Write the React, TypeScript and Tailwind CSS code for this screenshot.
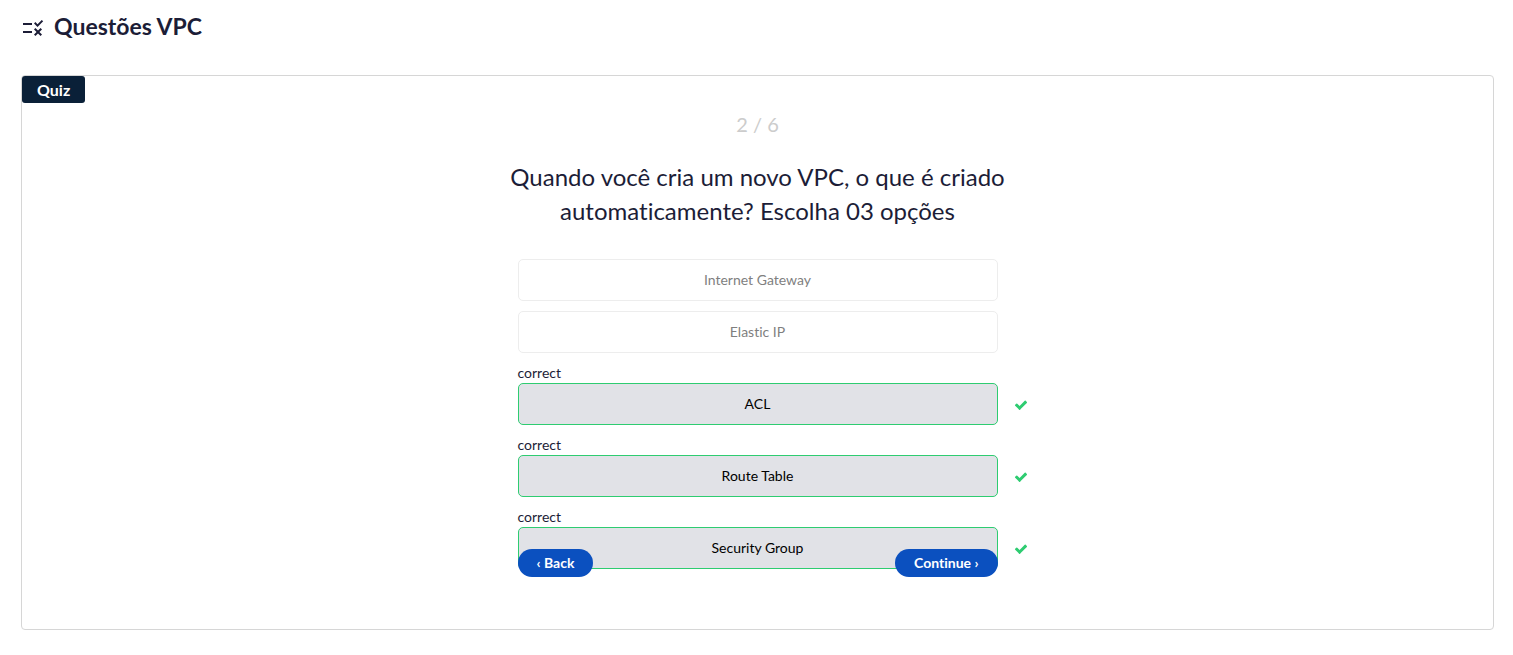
import React from "react";

type Option = { text: string; correct: boolean };

const options: Option[] = [
  { text: "Internet Gateway", correct: false },
  { text: "Elastic IP", correct: false },
  { text: "ACL", correct: true },
  { text: "Route Table", correct: true },
  { text: "Security Group", correct: true },
];

function RuleIcon() {
  return (
    <svg viewBox="0 0 24 24" className="size-6 shrink-0" fill="currentColor" aria-hidden="true">
      <path d="M16.54 11 13 7.46l1.41-1.41 2.12 2.12 4.24-4.24 1.41 1.41L16.54 11zM11 7H2v2h9V7zm10 6.41L19.59 12 17 14.59 14.41 12 13 13.41 15.59 16 13 18.59 14.41 20 17 17.41 19.59 20 21 18.59 18.41 16 21 13.41zM11 15H2v2h9v-2z" />
    </svg>
  );
}

function CheckIcon() {
  return (
    <svg
      viewBox="0 0 1792 1792"
      className="absolute left-full top-[15px] ml-4 size-3.5 text-[#2ecc71]"
      fill="currentColor"
      aria-hidden="true"
    >
      <path d="M1671 566q0 40-28 68l-724 724-136 136q-28 28-68 28t-68-28l-136-136-362-362q-28-28-28-68t28-68l136-136q28-28 68-28t68 28l294 295 656-657q28-28 68-28t68 28l136 136q28 28 28 68z" />
    </svg>
  );
}

function OptionItem({ option }: { option: Option }) {
  if (!option.correct) {
    return (
      <li>
        <button
          type="button"
          className="block h-[42px] w-full rounded-[5px] border border-[#ededed] bg-white text-center text-[#7f7f7f]"
        >
          {option.text}
        </button>
      </li>
    );
  }
  return (
    <li>
      <span className="block">correct</span>
      <div className="relative">
        <button
          type="button"
          className="block h-[42px] w-full rounded-[5px] border border-[#2ecc71] bg-[#e1e2e7] text-center text-black"
        >
          {option.text}
        </button>
        <CheckIcon />
      </div>
    </li>
  );
}

export default function App() {
  return (
    <main className="bg-white pb-6 pl-[21px] pr-[19px] pt-3 font-['Lato',sans-serif] text-[#1c1d37] [font-variant-ligatures:none]">
      <header className="flex items-end gap-[9px]">
        <RuleIcon />
        <h1 className="text-[23px] leading-7 font-bold">Questões VPC</h1>
      </header>

      <section className="mt-[35px] rounded border border-[#d6d6d6] pb-[52px]">
        <div className="flex">
          <span className="flex h-[27px] items-center rounded-[3px] bg-[#0a2038] px-[15px] text-base font-bold text-white">
            Quiz
          </span>
        </div>

        <div className="relative mx-auto max-w-[480px] pb-2 text-sm leading-5">
          <p className="mt-[7px] text-center text-xl leading-7 text-[#cccccc]">2 / 6</p>
          <h2 className="-mx-5 mt-[22px] text-center text-2xl leading-[34px]">
            Quando você cria um novo VPC, o que é criado automaticamente? Escolha 03 opções
          </h2>
          <ul className="mt-[31px] flex flex-col gap-2.5">
            {options.map((option) => (
              <OptionItem key={option.text} option={option} />
            ))}
          </ul>

          <nav className="absolute inset-x-0 bottom-0 flex justify-between">
            <button type="button" className="h-7 rounded-full bg-[#0b50bf] px-[19px] font-bold text-white">
              ‹ Back
            </button>
            <button type="button" className="h-7 rounded-full bg-[#0b50bf] px-[19px] font-bold text-white">
              Continue ›
            </button>
          </nav>
        </div>
      </section>
    </main>
  );
}
